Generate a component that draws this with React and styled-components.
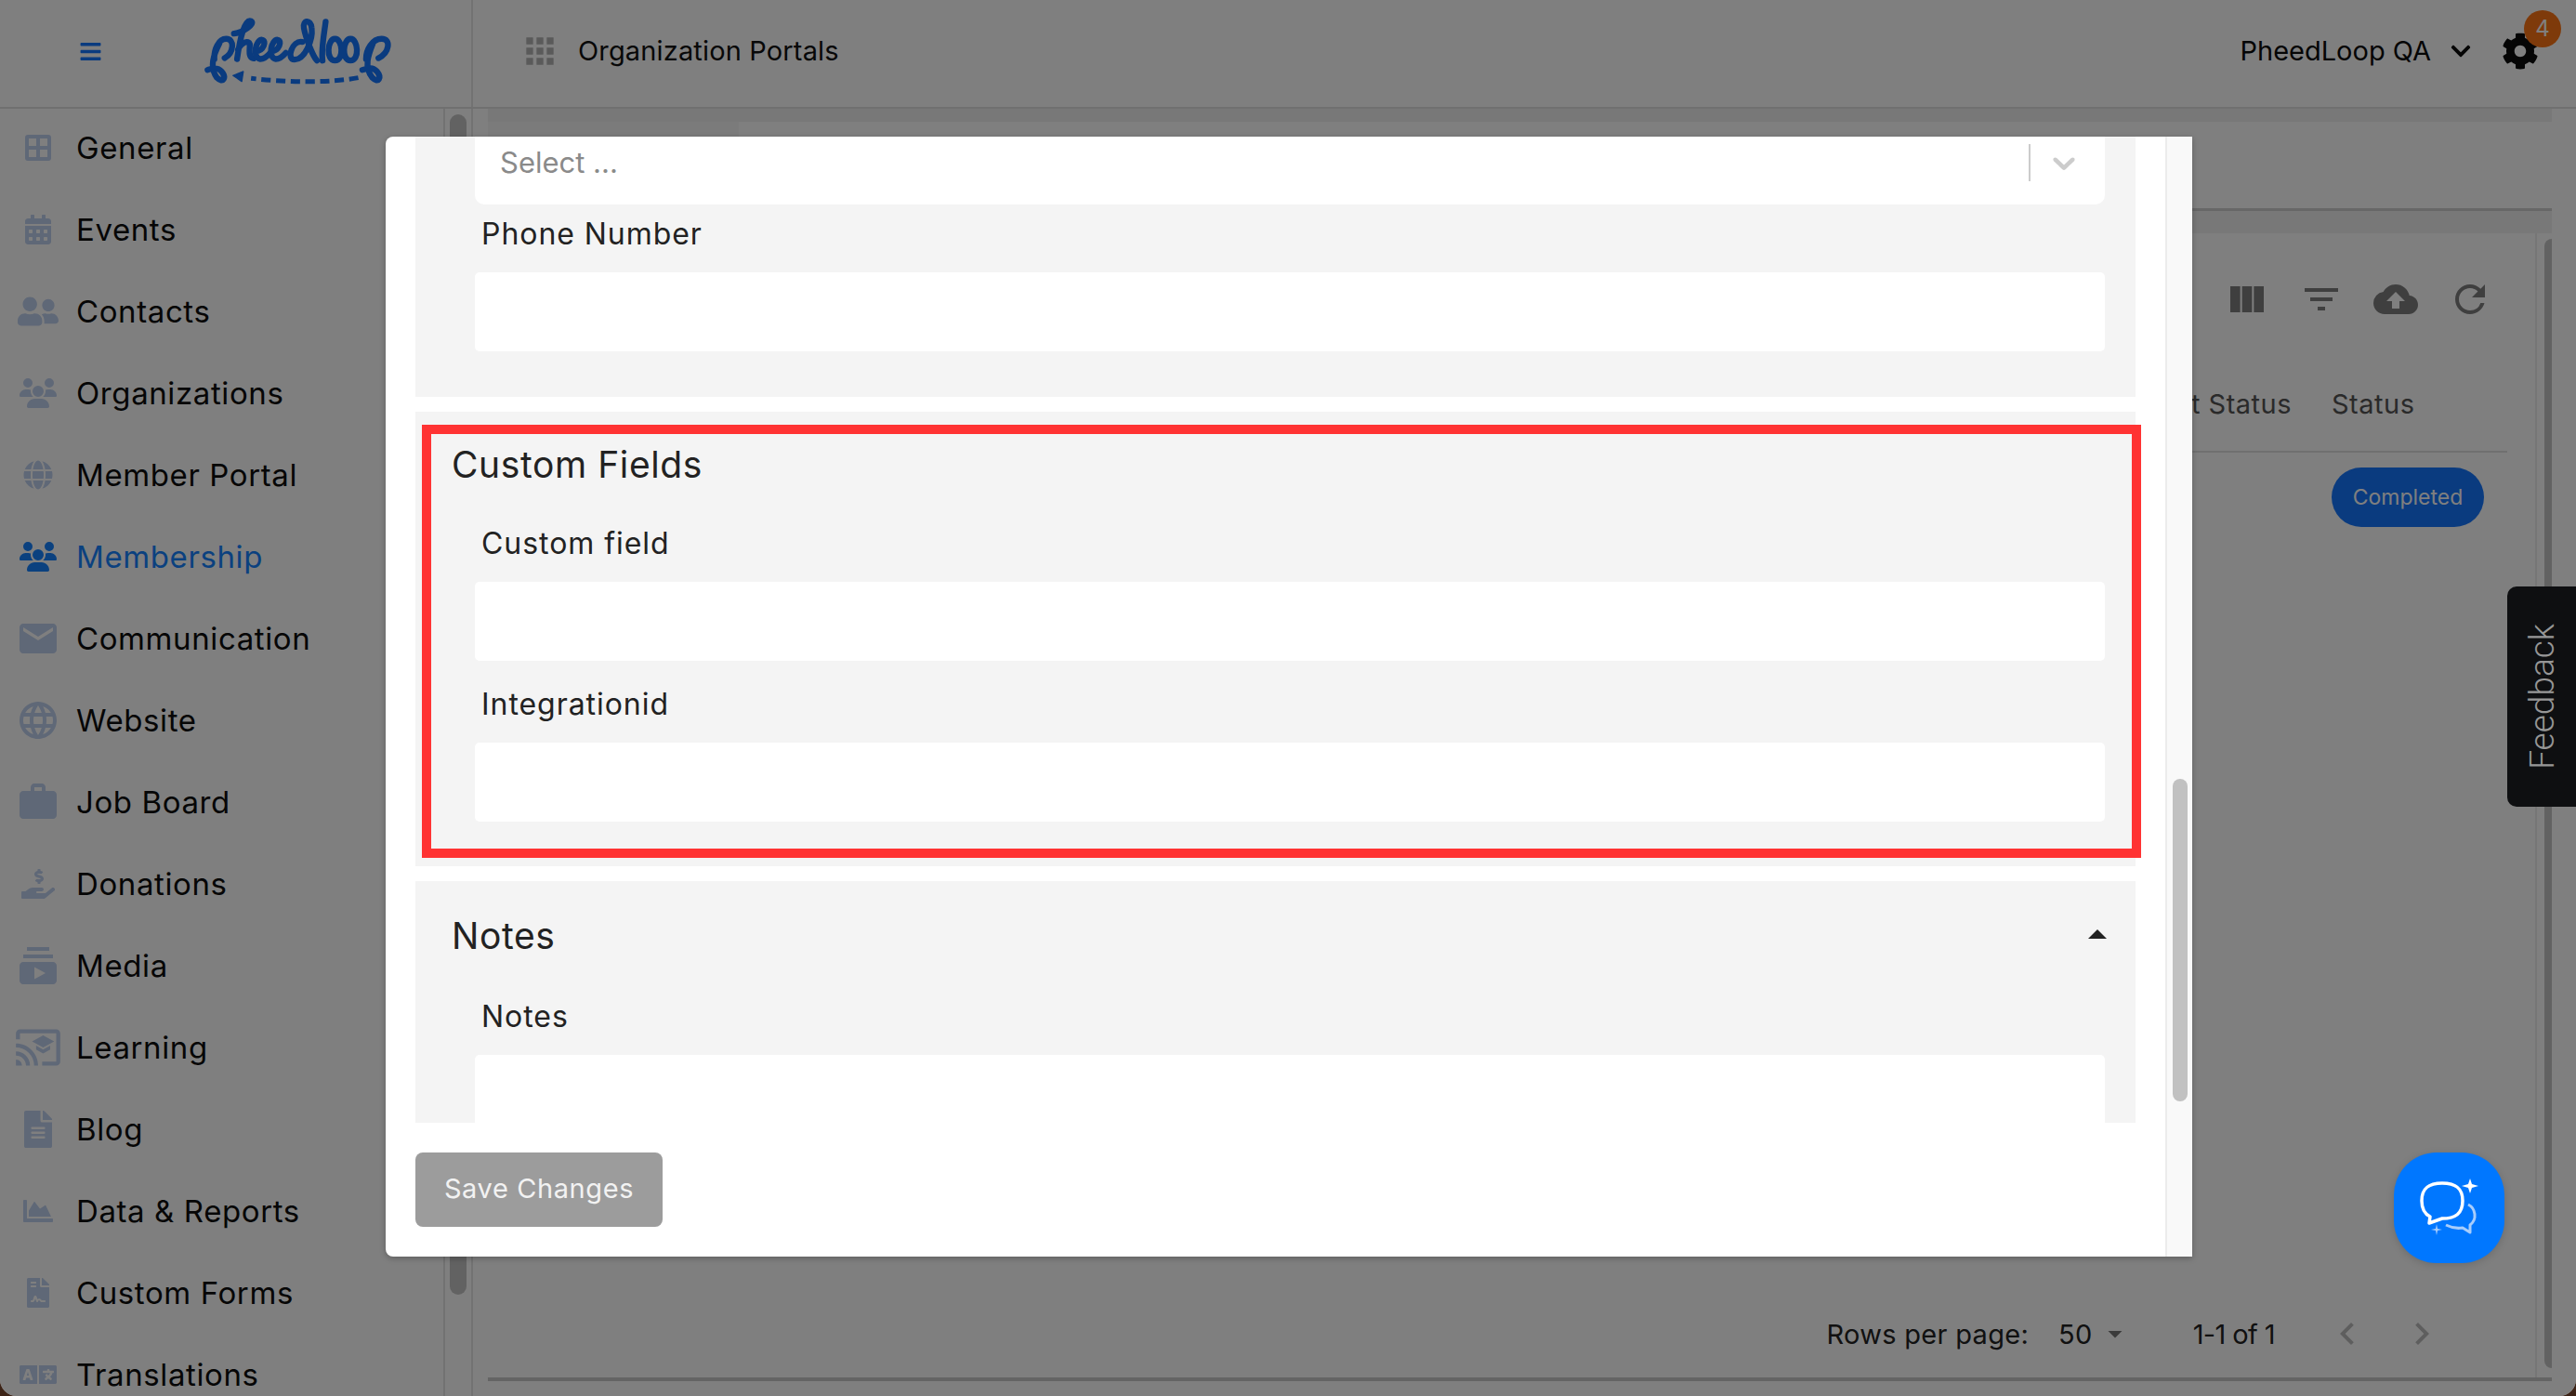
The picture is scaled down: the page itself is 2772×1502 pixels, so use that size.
import React from 'react'
import styled, { createGlobalStyle } from 'styled-components'
import {
  FaBars, FaCalendarAlt, FaChartArea, FaChevronDown, FaCog, FaFileAlt, FaFileContract,
  FaGlobe, FaHandHoldingUsd, FaLanguage, FaUserFriends,
} from 'react-icons/fa'
import { FaUsers } from 'react-icons/fa6'
import {
  MdApps, MdArrowDropDown, MdArrowDropUp, MdCastForEducation, MdChevronLeft, MdChevronRight,
  MdCloudUpload, MdEmail, MdFilterList, MdLanguage, MdRefresh, MdSubscriptions, MdViewColumn, MdWork,
} from 'react-icons/md'

const FONT = `Inter, "Noto Sans", "Liberation Sans", sans-serif`

const GlobalStyle = createGlobalStyle`
  html, body { margin: 0; height: 100%; background: #3d2417; overflow: hidden; }
  * { box-sizing: border-box; }
`

const Page = styled.div`
  position: relative;
  width: 100vw;
  height: 100vh;
  display: flex;
  flex-direction: column;
  overflow: hidden;
  background: #fff;
  border-radius: 0 0 18px 18px;
  font-family: ${FONT};
  color: #0c0c0c;
`

const TopBar = styled.header`
  flex: 0 0 117px;
  display: flex;
  align-items: center;
  border-bottom: 2px solid #e0e0e0;
`

const Brand = styled.div`
  flex: 0 0 509px;
  height: 100%;
  display: flex;
  align-items: center;
  padding: 0 0 4px 85px;
  border-right: 2px solid #e4e4e4;
  color: #1476ff;
`

const LogoSvg = styled.svg`
  width: 204px;
  height: 76px;
  margin-left: 110px;
  flex: none;
`

const PortalTitle = styled.div`
  display: flex;
  align-items: center;
  gap: 19px;
  margin: 0 0 6px 50px;
  font-size: 29px;
  letter-spacing: 0.15px;
  color: #111;
  svg { color: #b4b4b4; }
`

const Account = styled.div`
  margin: 0 0 6px auto;
  display: flex;
  align-items: center;
  padding-right: 40px;
  font-size: 29px;
  color: #0a0a0a;
`

const AccountName = styled.span`
  margin-right: 20px;
`

const Gear = styled.div`
  position: relative;
  display: flex;
  margin-left: 32px;
`

const Badge = styled.span`
  position: absolute;
  top: -24px;
  right: -24px;
  width: 40px;
  height: 40px;
  border-radius: 50%;
  background: #fd7514;
  color: #fff;
  font-size: 24px;
  line-height: 40px;
  text-align: center;
`

const Body = styled.div`
  flex: 1;
  min-height: 0;
  display: flex;
`

const Sidebar = styled.nav`
  flex: 0 0 509px;
  display: flex;
  border-right: 2px solid #e4e4e4;
`

const NavList = styled.ul`
  flex: 0 0 479px;
  margin: 0;
  padding: 0;
  list-style: none;
  border-right: 2px solid #e4e4e4;
`

const NavItem = styled.li`
  height: 88px;
  display: flex;
  align-items: center;
  padding-bottom: 4px;
  font-size: 33px;
  letter-spacing: 0.6px;
  color: ${p => (p.$active ? '#1682ff' : '#0c0c0c')};
`

const NavIcon = styled.span`
  flex: 0 0 82px;
  display: flex;
  justify-content: center;
  color: ${p => (p.$active ? '#1682ff' : '#bfd0ee')};
`

const SideTrack = styled.div`
  flex: 1;
  padding: 6px 5px 0 5px;
`

const SideThumb = styled.div`
  height: 1270px;
  border-radius: 10px;
  background: #c4c4c4;
`

const Main = styled.main`
  flex: 1;
  min-width: 0;
  display: flex;
  flex-direction: column;
  padding: 0 26px 16px 16px;
`

const TabStrip = styled.div`
  flex: 0 0 14px;
  background: #f0f0f0;
`

const TabArea = styled.div`
  flex: 0 0 96px;
  background: #fff;
  border-bottom: 3px solid #cfcfcf;
`

const ActiveTab = styled.div`
  width: 270px;
  height: 100%;
  background: #f6f6f6;
`

const CardGap = styled.div`
  flex: 0 0 24px;
  background: #f0f0f0;
`

const CardRow = styled.div`
  flex: 1;
  min-height: 0;
  display: flex;
  border-bottom: 4px solid #c8c8c8;
`

const Card = styled.section`
  flex: 1;
  min-width: 0;
  display: flex;
  flex-direction: column;
  padding: 0 30px 0 0;
  border-right: 2px solid #ececec;
`

const Toolbar = styled.div`
  flex: 0 0 142px;
  display: flex;
  align-items: center;
  justify-content: flex-end;
  color: #7f7f7f;
`

const ToolButton = styled.span`
  flex: 0 0 80px;
  display: flex;
  justify-content: center;
`

const HeaderRow = styled.div`
  flex: 0 0 94px;
  display: flex;
  justify-content: flex-end;
  align-items: center;
  padding-bottom: 9px;
  border-bottom: 2px solid #e0e0e0;
  font-size: 29px;
  letter-spacing: 0.5px;
  color: #555;
`

const HeaderCell = styled.div`
  flex: 0 0 ${p => p.$width}px;
  white-space: nowrap;
  text-align: ${p => p.$align || 'left'};
`

const DataRow = styled.div`
  display: flex;
  justify-content: flex-end;
  padding-top: 16px;
`

const StatusCell = styled.div`
  flex: 0 0 189px;
`

const Pill = styled.span`
  display: inline-block;
  width: 164px;
  height: 64px;
  border-radius: 32px;
  background: #1476ff;
  color: #fff;
  font-size: 23px;
  line-height: 64px;
  text-align: center;
`

const Pagination = styled.div`
  margin-top: auto;
  height: 92px;
  display: flex;
  align-items: center;
  justify-content: flex-end;
  padding: 0 52px 2px 0;
  font-size: 29px;
  letter-spacing: 0.3px;
  color: #222;
`

const Rows = styled.span`
  margin-right: 32px;
`

const PerPage = styled.span`
  display: flex;
  align-items: center;
  gap: 6px;
  margin-right: 66px;
`

const PageRange = styled.span`
  letter-spacing: -0.6px;
`

const PageNav = styled.span`
  display: flex;
  margin-left: 38px;
  color: #bcbcbc;
`

const MainScroll = styled.div`
  flex: 0 0 16px;
  padding: 6px 0 10px 8px;
`

const MainThumb = styled.div`
  height: 100%;
  border-radius: 8px 0 0 8px;
  background: #c4c4c4;
`

const Overlay = styled.div`
  position: absolute;
  inset: 0;
  z-index: 10;
  display: flex;
  padding: 147px 413px 150px 415px;
  background: rgba(0, 0, 0, 0.5);
`

const Modal = styled.div`
  position: relative;
  flex: 1;
  min-width: 0;
  display: flex;
  overflow: hidden;
  background: #fff;
  border-radius: 8px 0 0 8px;
  box-shadow: 0 2px 6px rgba(0, 0, 0, 0.25);
`

const ModalBody = styled.div`
  flex: 1;
  min-width: 0;
  display: flex;
  flex-direction: column;
  padding: 0 32px 32px 32px;
`

const Scroller = styled.div`
  flex: 1;
  min-height: 0;
  overflow: hidden;
`

const ScrollContent = styled.div`
  margin-top: -32px;
  display: flex;
  flex-direction: column;
  gap: 16px;
`

const Section = styled.section`
  background: #f4f4f4;
  padding: ${p => p.$pad};
`

const SectionHead = styled.div`
  display: flex;
  justify-content: space-between;
  align-items: center;
  padding-left: 39px;
  height: ${p => p.$height}px;
  padding-right: 4px;
  font-size: 39px;
  letter-spacing: 0.6px;
  color: #222;
`

const Fields = styled.div`
  padding-left: 64px;
  padding-right: 33px;
`

const Label = styled.div`
  height: ${p => p.$height}px;
  display: flex;
  align-items: flex-end;
  padding: 0 0 21px 7px;
  font-size: 32px;
  line-height: 40px;
  letter-spacing: 0.95px;
  color: #222;
`

const Input = styled.div`
  height: ${p => p.$height || 85}px;
  background: #fff;
  border-radius: 5px;
`

const Select = styled(Input)`
  display: flex;
  align-items: center;
  padding: 14px 0 0 27px;
  font-size: 31px;
  color: #8a8a8a;
  border-radius: 0 0 10px 10px;
`

const SelectSep = styled.span`
  margin-left: auto;
  width: 2px;
  height: 40px;
  background: #ccc;
`

const SelectArrow = styled.svg`
  width: 40px;
  height: 40px;
  margin: 0 24px 0 16px;
  fill: #ccc;
`

const RedFrame = styled.div`
  position: absolute;
  top: 310px;
  left: 39px;
  width: 1850px;
  height: 466px;
  border: 10px solid #ff3333;
  pointer-events: none;
`

const SaveButton = styled.button`
  align-self: flex-start;
  margin-top: 32px;
  width: 266px;
  height: 80px;
  padding: 0 0 4px;
  border: 0;
  border-radius: 8px;
  background: #9c9c9c;
  color: #f2f2f2;
  font-family: ${FONT};
  font-size: 29px;
  letter-spacing: 0.6px;
`

const ModalTrack = styled.div`
  flex: 0 0 29px;
  background: #f9f9f9;
  border-left: 2px solid #ececec;
  padding: 691px 5px 0 6px;
`

const ModalThumb = styled.div`
  height: 347px;
  border-radius: 9px;
  background: #c1c1c1;
`

const Feedback = styled.div`
  position: absolute;
  z-index: 20;
  top: 631px;
  right: 0;
  width: 74px;
  height: 237px;
  display: flex;
  align-items: center;
  justify-content: center;
  border-radius: 10px 0 0 10px;
  background: #0e0f11;
  color: #969696;
  font-family: Roboto, "Liberation Sans", sans-serif;
  font-weight: 300;
  font-size: 37px;
  writing-mode: vertical-rl;
`

const FeedbackText = styled.span`
  transform: rotate(180deg);
`

const ChatButton = styled.div`
  position: absolute;
  z-index: 20;
  top: 1240px;
  left: 2576px;
  width: 119px;
  height: 119px;
  display: flex;
  align-items: center;
  justify-content: center;
  border-radius: 46px;
  background: #0077ff;
  box-shadow: 0 2px 8px rgba(0, 0, 0, 0.15);
`

const Logo = () => (
  <LogoSvg viewBox="120 55 610 225" fill="none" stroke="currentColor" strokeWidth="19" strokeLinecap="round" strokeLinejoin="round">
    <path d="M152,190 C150,160 165,125 190,125 C218,125 215,170 185,187 M168,140 C150,175 135,215 160,250 C180,270 192,250 175,230 C160,212 140,222 130,225" />
    <path d="M215,108 C245,105 285,75 270,68 C250,60 235,120 225,190 M228,160 C240,135 262,128 266,142 C266,160 260,185 278,188" />
    <path d="M285,165 C310,165 322,130 305,128 C285,128 272,185 300,190 C312,190 325,178 332,170" />
    <path d="M335,165 C360,165 372,130 355,128 C335,128 322,185 350,190 C362,190 375,178 382,170" />
    <path d="M435,135 C402,128 382,192 410,192 C442,192 470,130 465,90 C462,60 435,65 440,90 C445,120 468,180 482,195" />
    <path d="M510,70 C505,110 495,160 500,195" />
    <path d="M540,125 C515,125 510,195 540,195 C570,195 565,125 540,125 M590,125 C565,125 560,195 590,195 C620,195 615,125 590,125" />
    <path d="M640,190 C640,160 660,125 690,125 C722,125 715,170 680,187 M662,140 C648,175 632,215 660,250 C680,270 692,250 675,230 C660,212 640,222 628,225" />
    <path d="M615,250 C520,268 380,265 270,252" strokeDasharray="30 17" strokeLinecap="butt" strokeWidth="15" />
    <path d="M212,243 L245,230 L240,262 Z" fill="currentColor" strokeWidth="4" />
  </LogoSvg>
)

const ChatIcon = () => (
  <svg width="68" height="64" viewBox="0 0 68 64" fill="none">
    <path d="M4,24 C4,10 12,5 26,5 C40,5 48,10 48,24 C48,38 40,43 26,43 L12,48 L13,41 C7,38 4,32 4,24 Z" stroke="#fff" strokeWidth="3.5" strokeLinejoin="round" />
    <path d="M56,0 L58,6 L65,8 L58,10 L56,16 L54,10 L47,8 L54,6 Z" fill="#fff" />
    <path d="M20,49 L21,54 L26,55 L21,56 L20,61 L19,56 L14,55 L19,54 Z" fill="#a8cdfb" />
    <path d="M54,28 C62,32 64,44 56,50 L56,58 L48,53 C42,54 36,53 30,50" stroke="#a8cdfb" strokeWidth="3" strokeLinejoin="round" />
  </svg>
)

const GeneralIcon = ({ size }) => (
  <svg width={size} height={size} viewBox="0 0 28 28" fill="currentColor">
    <path fillRule="evenodd" d="M3,0 H25 A3,3 0 0 1 28,3 V25 A3,3 0 0 1 25,28 H3 A3,3 0 0 1 0,25 V3 A3,3 0 0 1 3,0 Z M4,4 V12 H12 V4 Z M16,4 V12 H24 V4 Z M4,16 V24 H12 V16 Z M16,16 V24 H24 V16 Z" />
  </svg>
)

const NAV = [
  { label: 'General', Icon: GeneralIcon, size: 28 },
  { label: 'Events', Icon: FaCalendarAlt, size: 32 },
  { label: 'Contacts', Icon: FaUserFriends, size: 44 },
  { label: 'Organizations', Icon: FaUsers, size: 40 },
  { label: 'Member Portal', Icon: FaGlobe, size: 32 },
  { label: 'Membership', Icon: FaUsers, size: 40, active: true },
  { label: 'Communication', Icon: MdEmail, size: 48 },
  { label: 'Website', Icon: MdLanguage, size: 48 },
  { label: 'Job Board', Icon: MdWork, size: 48 },
  { label: 'Donations', Icon: FaHandHoldingUsd, size: 36 },
  { label: 'Media', Icon: MdSubscriptions, size: 48 },
  { label: 'Learning', Icon: MdCastForEducation, size: 52 },
  { label: 'Blog', Icon: FaFileAlt, size: 40 },
  { label: 'Data & Reports', Icon: FaChartArea, size: 32 },
  { label: 'Custom Forms', Icon: FaFileContract, size: 32 },
  { label: 'Translations', Icon: FaLanguage, size: 40 },
]

export default function App() {
  return (
    <Page>
      <GlobalStyle />
      <TopBar>
        <Brand>
          <FaBars size={25} />
          <Logo />
        </Brand>
        <PortalTitle>
          <MdApps size={44} />
          Organization Portals
        </PortalTitle>
        <Account>
          <AccountName>PheedLoop QA</AccountName>
          <FaChevronDown size={24} />
          <Gear>
            <FaCog size={40} />
            <Badge>4</Badge>
          </Gear>
        </Account>
      </TopBar>
      <Body>
        <Sidebar>
          <NavList>
            {NAV.map(({ label, Icon, size, active }) => (
              <NavItem key={label} $active={active}>
                <NavIcon $active={active}><Icon size={size} /></NavIcon>
                {label}
              </NavItem>
            ))}
          </NavList>
          <SideTrack><SideThumb /></SideTrack>
        </Sidebar>
        <Main>
          <TabStrip />
          <TabArea><ActiveTab /></TabArea>
          <CardGap />
          <CardRow>
            <Card>
              <Toolbar>
                <ToolButton><MdViewColumn size={48} /></ToolButton>
                <ToolButton><MdFilterList size={48} /></ToolButton>
                <ToolButton><MdCloudUpload size={48} /></ToolButton>
                <ToolButton><MdRefresh size={48} /></ToolButton>
              </Toolbar>
              <HeaderRow>
                <HeaderCell $width={240} $align="right">Payment Status</HeaderCell>
                <HeaderCell $width={43} />
                <HeaderCell $width={189}>Status</HeaderCell>
              </HeaderRow>
              <DataRow>
                <StatusCell><Pill>Completed</Pill></StatusCell>
              </DataRow>
              <Pagination>
                <Rows>Rows per page:</Rows>
                <PerPage>50 <MdArrowDropDown size={36} color="#777" /></PerPage>
                <PageRange>1-1 of 1</PageRange>
                <PageNav>
                  <ToolButton><MdChevronLeft size={48} /></ToolButton>
                  <ToolButton><MdChevronRight size={48} /></ToolButton>
                </PageNav>
              </Pagination>
            </Card>
            <MainScroll><MainThumb /></MainScroll>
          </CardRow>
        </Main>
      </Body>
      <Overlay>
        <Modal>
          <ModalBody>
            <Scroller>
              <ScrollContent>
                <Section $pad="0 0 49px">
                  <Fields>
                    <Select $height={105}>
                      Select ...
                      <SelectSep />
                      <SelectArrow viewBox="0 0 20 20">
                        <path d="M4.516 7.548c0.436-0.446 1.043-0.481 1.576 0l3.908 3.747 3.908-3.747c0.533-0.481 1.141-0.446 1.574 0 0.436 0.445 0.408 1.197 0 1.615-0.406 0.418-4.695 4.502-4.695 4.502-0.217 0.223-0.502 0.335-0.787 0.335s-0.57-0.112-0.789-0.335c0 0-4.287-4.084-4.695-4.502s-0.436-1.17 0-1.615z" />
                      </SelectArrow>
                    </Select>
                    <Label $height={73}>Phone Number</Label>
                    <Input />
                  </Fields>
                </Section>
                <Section $pad="0 0 48px">
                  <SectionHead $height={113}>Custom Fields</SectionHead>
                  <Fields>
                    <Label $height={70}>Custom field</Label>
                    <Input />
                    <Label $height={88}>Integrationid</Label>
                    <Input />
                  </Fields>
                </Section>
                <Section $pad="0">
                  <SectionHead $height={116}>
                    Notes
                    <MdArrowDropUp size={48} style={{ marginRight: 13 }} />
                  </SectionHead>
                  <Fields>
                    <Label $height={71}>Notes</Label>
                    <Input $height={120} />
                  </Fields>
                </Section>
              </ScrollContent>
            </Scroller>
            <SaveButton>Save Changes</SaveButton>
          </ModalBody>
          <ModalTrack><ModalThumb /></ModalTrack>
          <RedFrame />
        </Modal>
      </Overlay>
      <Feedback><FeedbackText>Feedback</FeedbackText></Feedback>
      <ChatButton><ChatIcon /></ChatButton>
    </Page>
  )
}
